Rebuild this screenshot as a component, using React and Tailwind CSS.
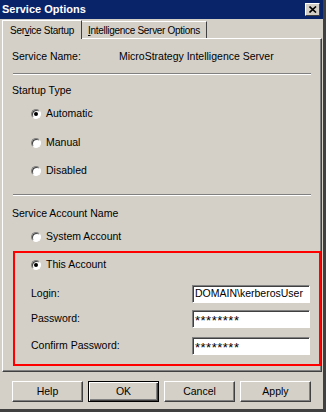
const font = { fontFamily: '"Liberation Sans", Arial, sans-serif' };

const Radio = ({ checked, label }) => (
  <div className="flex items-center h-[18px] pl-[28px]">
    <span className="relative w-[10px] h-[10px] rounded-full border border-t-[#808080] border-l-[#808080] border-b-white border-r-white bg-white flex items-center justify-center shadow-[inset_1px_1px_0_#404040]">
      {checked && <span className="w-[4px] h-[4px] rounded-full bg-black" />}
    </span>
    <span className="ml-[5px]">{label}</span>
  </div>
);

const Field = ({ label, value, mt, secret }) => (
  <div className={`flex items-center h-[18px] ${mt}`}>
    <span className="pl-[16px] w-[177px]">{label}</span>
    <div className="w-[118px] h-[18px] bg-white border border-t-[#808080] border-l-[#808080] border-b-white border-r-white shadow-[inset_1px_1px_0_#404040] flex items-center px-[2px] text-black overflow-hidden whitespace-nowrap">
      {secret ? (
        <span className="text-[13px] tracking-[0.5px] leading-none pt-[3px]">{value}</span>
      ) : (
        value
      )}
    </div>
  </div>
);

const Btn = ({ label, isDefault }) => (
  <button
    className={`w-[71px] h-[21px] bg-[#d4d0c8] text-black ${
      isDefault
        ? "border border-black shadow-[inset_1px_1px_0_#fff,inset_-1px_-1px_0_#404040,inset_-2px_-2px_0_#808080]"
        : "border border-t-white border-l-white border-b-[#404040] border-r-[#404040] shadow-[inset_-1px_-1px_0_#808080]"
    }`}
  >
    {label}
  </button>
);

const Sep = ({ mt }) => (
  <div className={`mx-[10px] ${mt}`}>
    <div className="h-px bg-[#808080]" />
    <div className="h-px bg-white" />
  </div>
);

export default function App() {
  return (
    <div
      className="w-[326px] h-[412px] bg-[#d4d0c8] text-[10.5px] text-black flex flex-col overflow-hidden border-r-[3px] border-r-[#404040]"
      style={font}
    >
      {/* Title bar */}
      <div className="h-[19px] shrink-0 bg-[#0a246a] flex items-center justify-between pl-[2px] pr-[3px]">
        <span className="text-white font-bold text-[11px]">Service Options</span>
        <span className="w-[15px] h-[13px] bg-[#d4d0c8] border border-t-white border-l-white border-b-[#404040] border-r-[#404040] flex items-center justify-center">
          <svg width="8" height="7" viewBox="0 0 8 7">
            <path d="M0.5 0.5 L7 6.5 M7 0.5 L0.5 6.5" stroke="#000" strokeWidth="1.6" />
          </svg>
        </span>
      </div>

      {/* Tabs */}
      <div className="flex items-end h-[19px] shrink-0 pl-[2px] text-[10px] tracking-[-0.3px] whitespace-nowrap">
        <div className="h-[19px] w-[80px] border-t border-l border-t-white border-l-white border-r border-r-[#404040] bg-[#d4d0c8] flex items-center justify-center relative top-px z-10">
          <span>
            Ser<span className="underline">v</span>ice Startup
          </span>
        </div>
        <div className="h-[17px] w-[125px] border-t border-t-white border-r border-r-[#404040] flex items-center justify-center">
          <span>
            <span className="underline">I</span>ntelligence Server Options
          </span>
        </div>
      </div>

      {/* Panel */}
      <div className="ml-[2px] mr-[1px] h-[334px] shrink-0 border border-t-white border-l-white border-b-[#404040] border-r-[#404040] shadow-[inset_-1px_-1px_0_#808080] flex flex-col">
        <div className="flex items-center h-[18px] mt-[9px] pl-[9px]">
          <span className="w-[107px]">Service Name:</span>
          <span>MicroStrategy Intelligence Server</span>
        </div>
        <Sep mt="mt-[7px]" />
        <div className="flex items-center h-[18px] mt-[7px] pl-[9px]">Startup Type</div>
        <div className="mt-[5px]">
          <Radio checked label="Automatic" />
        </div>
        <div className="mt-[11px]">
          <Radio label="Manual" />
        </div>
        <div className="mt-[10px]">
          <Radio label="Disabled" />
        </div>
        <Sep mt="mt-[14px]" />
        <div className="flex items-center h-[18px] mt-[9px] pl-[9px]">Service Account Name</div>
        <div className="mt-[5px]">
          <Radio label="System Account" />
        </div>

        {/* highlighted account section */}
        <div className="mt-[5px] ml-[10px] border-2 border-[#ff0000] pt-[3px] pb-[9px]">
          <div className="-ml-[12px]">
            <Radio checked label="This Account" />
          </div>
          <Field label="Login:" value="DOMAIN\kerberosUser" mt="mt-[11px]" />
          <Field label="Password:" value="********" mt="mt-[7px]" secret />
          <Field label="Confirm Password:" value="********" mt="mt-[9px]" secret />
        </div>
      </div>

      {/* Buttons */}
      <div className="flex gap-[5px] pl-[12px] mt-[9px]">
        <Btn label="Help" />
        <Btn label="OK" isDefault />
        <Btn label="Cancel" />
        <Btn label="Apply" />
      </div>
      <div className="mt-auto h-[3px] bg-[#404040]" />
    </div>
  );
}
